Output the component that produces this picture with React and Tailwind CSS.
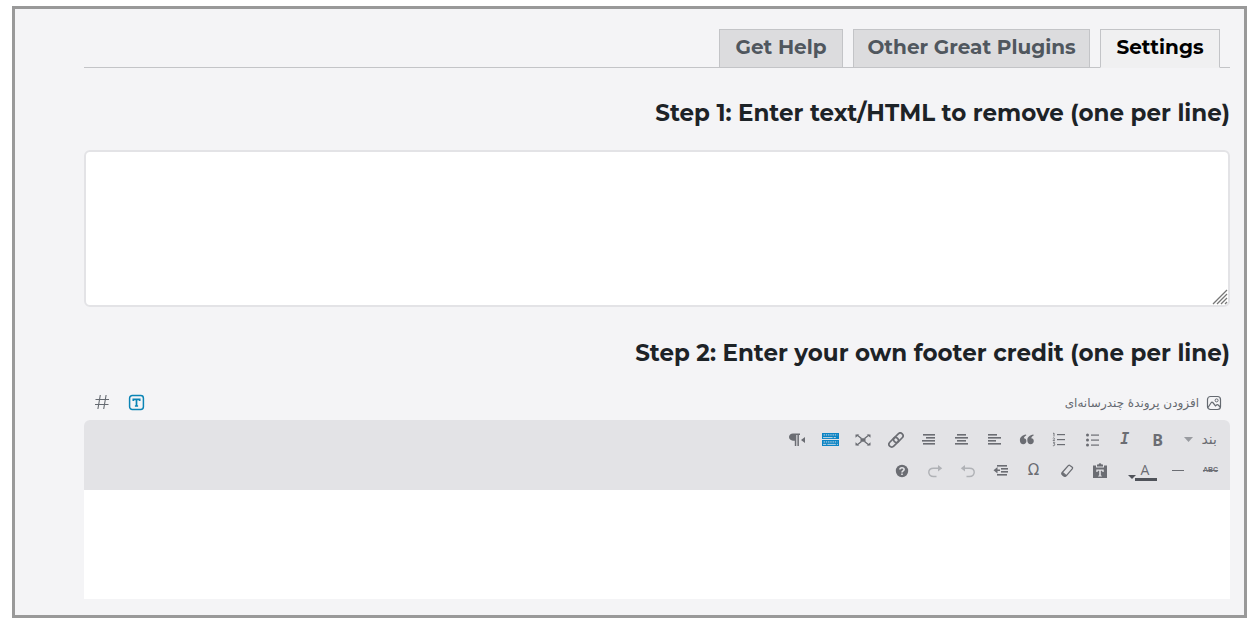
import React from "react";

const stroke = { fill: "none", stroke: "currentColor", strokeWidth: 1 };

function Icon({ children, size = 16 }) {
  return (
    <svg width={size} height={size} viewBox="0 0 16 16" className="shrink-0" aria-hidden="true">
      {children}
    </svg>
  );
}

function ToolButton({ label, className = "w-[33px] justify-center", children }) {
  return (
    <button type="button" aria-label={label} className={`flex h-[31px] items-center ${className}`}>
      {children}
    </button>
  );
}

const bars = (rows) => rows.map(([x, y, w]) => <rect key={y} x={x} y={y} width={w} height="1.6" fill="currentColor" />);

const QuoteIcon = () => (
  <Icon>
    <path
      fill="currentColor"
      d="M7.3 3.4C5.7 4 5 5 4.9 6.3c1.5.1 2.5 1.2 2.5 2.7 0 1.7-1.3 3.2-3.100 3.200-2 0-3.400-1.600-3.400-4C.9 5.300 3.300 3.200 7 2.600zM14.700 3.400c-1.600.6-2.300 1.600-2.400 2.900 1.500.1 2.500 1.200 2.500 2.700 0 1.700-1.300 3.200-3.100 3.200-2 0-3.400-1.600-3.400-4 0-2.900 2.400-5 6.100-5.600z"
    />
  </Icon>
);

const BulletIcon = () => (
  <Icon>
    {[3.5, 8.5, 13.5].map((y) => (
      <g key={y}>
        <circle cx="3.500" cy={y - 0.5} r="1.500" fill="currentColor" />
        <rect x="7" y={y - 1} width="8" height="1.200" fill="currentColor" />
      </g>
    ))}
  </Icon>
);

const NumberIcon = () => (
  <Icon>
    {[2, 7, 12].map((y) => (
      <rect key={y} x="6" y={y} width="8" height="1.2" fill="currentColor" />
    ))}
    <path {...stroke} strokeWidth=".9" d="M2 1.500l1-.5v3.500M1.800 6.300c1-.9 2.200-.1 1.500.9L2 8.700h2M2 10.700h1.800l-1 1.300c1.600.1 1.300 2-.9 1.700" />
  </Icon>
);

const LinkIcon = () => (
  <Icon>
    <g transform="rotate(-45 8 8)" fill="none" stroke="currentColor" strokeWidth="1.700">
      <rect x="-.8" y="5.200" width="11" height="5.600" rx="2.800" />
      <rect x="5.800" y="5.200" width="11" height="5.600" rx="2.800" />
    </g>
  </Icon>
);

const ExpandIcon = () => (
  <Icon>
    <path {...stroke} strokeWidth="1.300" d="M2 3l4.500 3.500M14 3L9.500 6.500M2 13l4.500-3.500M14 13L9.500 9.500" />
    <path fill="currentColor" d="M.5 2.500h3.800L.5 5.700zM15.500 2.500h-3.800l3.800 3.200zM.5 13.500h3.800L.5 10.300zM15.500 13.500h-3.800l3.800-3.200zM5.500 6.300h5v3.400h-5z" />
  </Icon>
);

const KitchenIcon = () => (
  <Icon size={17}>
    <path fill="currentColor" d="M0 1.800h16v5.800H0zM0 8.400h16v5.800H0z" />
    <path stroke="#e3e3e6" strokeWidth=".9" strokeDasharray="1.300 .8" d="M1.500 3.700h13M1.500 10.300h13" />
    <path stroke="#e3e3e6" strokeWidth=".8" d="M1 6.200h9M11 6.200h2M1 12.600h3M5 12.600h8M14 12.600h1" />
  </Icon>
);

const PilcrowIcon = () => (
  <Icon>
    <path fill="currentColor" d="M4 1.500h7V3H9.900v11H8.400V3H7.300v11H5.800V8.700H4C1.700 8.700 0 7.200 0 5.100s1.700-3.600 4-3.600zM16 5v6l-4-3z" />
  </Icon>
);

const PasteIcon = () => (
  <Icon>
    <path fill="currentColor" fillRule="evenodd" d="M1 2.500h3v2h8v-2h3V15H1zM4.300 6.500V9h1.200l.3-1.200h1.400v4.700l-1 .3v.7h3.600v-.7l-1-.3V7.800h1.400l.3 1.200h1.200V6.500z" />
    <path fill="currentColor" d="M5 1.500h1.500C6.700.7 7.200.3 8 .3s1.300.4 1.500 1.200H11v2H5z" />
  </Icon>
);

const EraserIcon = () => (
  <Icon>
    <path {...stroke} strokeWidth="1.300" strokeLinejoin="round" d="M9.500 2.400q.7-.6 1.400 0l2.400 1.800q.6.6.1 1.400l-6.200 7.200q-1 .8-2 .1l-2-1.700q-.7-.8 0-1.700zM3.300 9.200l4 3.500" />
    <path fill="currentColor" d="M2.700 9.600l4.300 3.500c-1 1-2.200.7-3 0-1.200-1-2.100-1.600-1.300-3.500z" />
  </Icon>
);

const OutdentIcon = () => (
  <Icon>
    {bars([[4, 2, 10], [8, 5, 7], [8, 8, 7], [4, 11, 10]])}
    <path fill="currentColor" d="M.5 7.300l4-3.200v2.400H7v1.600H4.500v2.400z" />
  </Icon>
);

const UndoIcon = () => (
  <Icon>
    <path {...stroke} strokeWidth="1.400" d="M3 5.200h6.500c6.300 0 6.300 8.300 0 8.300H6.500" />
    <path fill="currentColor" d="M.8 5.200L5 1.900v6.600z" />
  </Icon>
);

const RedoIcon = () => (
  <Icon>
    <path {...stroke} strokeWidth="1.400" d="M13 5.200H6.500c-6.300 0-6.300 8.300 0 8.300h3" />
    <path fill="currentColor" d="M15.200 5.200L11 1.900v6.600z" />
  </Icon>
);

const HelpIcon = () => (
  <Icon>
    <circle cx="8" cy="8" r="6.200" fill="currentColor" />
    <path fill="none" stroke="#e3e3e6" strokeWidth="1.600" d="M5.900 6.600c0-2.500 4.200-2.500 4.200-.2C10.100 7.900 8 7.700 8 9.500M8 10.500v1.600" />
  </Icon>
);

const ImageIcon = () => (
  <Icon>
    <rect x="1.500" y="1.500" width="13" height="13" rx="3" {...stroke} strokeWidth="1.200" />
    <circle cx="10.600" cy="5.400" r="1.500" {...stroke} />
    <path {...stroke} strokeWidth="1.200" d="M2 12.500l3.300-5q.7-.8 1.500 0l2.700 3.300 1.300-1q.8-.4 1.400.2l2 2" />
  </Icon>
);

const VisualIcon = () => (
  <Icon size={17}>
    <rect x="1.500" y="1.500" width="13" height="13" rx="2.500" {...stroke} strokeWidth="1.400" />
    <path {...stroke} strokeWidth="1.600" d="M5 6.600V5h6v1.600M8 5v6.300M6.500 11.300h3" />
  </Icon>
);

const CodeIcon = () => (
  <Icon>
    <path {...stroke} strokeWidth="1.100" d="M6.300 1L3.900 15M12.100 1L9.700 15M1.500 5.500h13.500M1 10.500h13.500" />
  </Icon>
);

const tab = "flex h-[39px] items-center justify-center border border-[#c3c4c7] pb-1 font-[Montserrat,Inter,sans-serif] text-[20px] font-bold";
const heading = "text-[23px] leading-8 font-bold text-[#1d2327] font-[Montserrat,Inter,sans-serif]";

export default function App() {
  return (
    <main
      dir="rtl"
      className="mt-1.5 mr-[13px] ml-3 border-[3px] border-[#999] bg-[#f4f4f6] pt-5 pr-3.5 pb-4 pl-[69px] font-['DejaVu_Sans',sans-serif]"
    >
      <nav className="flex gap-2.5 border-b border-[#c3c4c7] px-2.5">
        <a href="#settings" aria-current="page" className={`${tab} -mb-px w-[120px] border-b-[#f0f0f1] bg-[#f0f0f1] text-black`}>
          Settings
        </a>
        <a href="#plugins" className={`${tab} -mb-px w-[237px] bg-[#dcdcde] text-[#50575e]`}>
          Other Great Plugins
        </a>
        <a href="#help" className={`${tab} -mb-px w-[124px] bg-[#dcdcde] text-[#50575e]`}>
          Get Help
        </a>
      </nav>

      <h2 className={`${heading} mt-[29px]`}>
        <label htmlFor="remove" dir="ltr" className="block text-right">
          Step 1: Enter text/HTML to remove (one per line)
        </label>
      </h2>
      <div className="relative mt-[21px]">
        <textarea
          id="remove"
          className="block h-[157px] w-full resize-none rounded-md border-2 border-[#e3e3e6] bg-white p-2 outline-none"
        />
        <svg className="pointer-events-none absolute right-0.5 bottom-0.5" width="16" height="16" viewBox="0 0 16 16" aria-hidden="true">
          <path fill="none" stroke="#777" strokeWidth="1.300" d="M1 15L15 1M5 15L15 5M9 15l6-6M13 15l2-2" />
        </svg>
      </div>

      <h2 className={`${heading} mt-[30px]`}>
        <label htmlFor="credit" dir="ltr" className="block text-right">
          Step 2: Enter your own footer credit (one per line)
        </label>
      </h2>
      <div className="mt-4 flex h-[35px] items-center justify-between pr-2 pl-px text-[#646970]">
        <button type="button" className="flex items-center gap-[7px] text-[12px]">
          <ImageIcon />
          افزودن پروندهٔ چندرسانه‌ای
        </button>
        <div className="flex">
          <button type="button" aria-label="دیداری" className="flex w-[34px] justify-center text-[#0a84b5]">
            <VisualIcon />
          </button>
          <button type="button" aria-label="متن" className="flex w-[34px] justify-center">
            <CodeIcon />
          </button>
        </div>
      </div>

      <div role="toolbar" aria-label="ویرایشگر" className="rounded-t-md bg-[#e3e3e6] px-[3px] py-1 text-[#6b6d73]">
        <div className="flex">
          <div className="relative flex w-[53px] items-center">
            <select aria-label="قالب" className="w-full appearance-none bg-transparent pr-2.5 text-[14px] outline-none">
              <option>بند</option>
            </select>
            <svg className="pointer-events-none absolute left-2.5" width="9" height="5" viewBox="0 0 9 5" aria-hidden="true">
              <path fill="#999ba0" d="M0 0h9L4.500 5z" />
            </svg>
          </div>
          <div className="grid w-[393px] grid-cols-12 justify-items-center">
            <ToolButton label="درشت">
              <span className="font-['Open_Sans',sans-serif] text-[16px] font-bold">B</span>
            </ToolButton>
            <ToolButton label="کج">
              <span className="font-['DejaVu_Sans_Mono',monospace] text-[15px] font-bold italic">I</span>
            </ToolButton>
            <ToolButton label="فهرست"><BulletIcon /></ToolButton>
            <ToolButton label="فهرست شماره‌دار"><NumberIcon /></ToolButton>
            <ToolButton label="نقل قول"><QuoteIcon /></ToolButton>
            <ToolButton label="چپ‌چین"><Icon>{bars([[2, 2, 9], [2, 5, 13], [2, 8, 8], [2, 11, 13]])}</Icon></ToolButton>
            <ToolButton label="وسط‌چین"><Icon>{bars([[4, 2, 9], [2, 5, 13], [4, 8, 9], [2, 11, 13]])}</Icon></ToolButton>
            <ToolButton label="راست‌چین"><Icon>{bars([[3, 2, 12], [6, 5, 9], [2, 8, 13], [3, 11, 12]])}</Icon></ToolButton>
            <ToolButton label="پیوند"><LinkIcon /></ToolButton>
            <ToolButton label="تمام صفحه"><ExpandIcon /></ToolButton>
            <ToolButton label="نوار ابزار" className="w-[33px] justify-center text-[#0a84c5]"><KitchenIcon /></ToolButton>
            <ToolButton label="راست به چپ"><PilcrowIcon /></ToolButton>
          </div>
        </div>
        <div className="flex">
          <ToolButton label="خط‌خورده">
            <span className="font-['Liberation_Sans',sans-serif] text-[7px] font-bold line-through">ABC</span>
          </ToolButton>
          <ToolButton label="خط افقی">
            <Icon><rect x="2" y="7" width="12" height="1" fill="currentColor" /></Icon>
          </ToolButton>
          <ToolButton label="رنگ متن" className="w-[45px] justify-start">
            <svg width="34" height="20" viewBox="0 0 34 20" aria-hidden="true">
              <text x="18" y="14" textAnchor="middle" direction="ltr" fill="currentColor" className="font-['Open_Sans',sans-serif] text-[14px]">A</text>
              <path fill="#50535a" d="M8 17h22v3H8zM1 14h8l-4 4z" />
            </svg>
          </ToolButton>
          <ToolButton label="چسباندن متن"><PasteIcon /></ToolButton>
          <ToolButton label="پاک کردن قالب"><EraserIcon /></ToolButton>
          <ToolButton label="نویسه ویژه">
            <span className="font-['DejaVu_Sans',sans-serif] text-[15px]">Ω</span>
          </ToolButton>
          <ToolButton label="کاهش تورفتگی"><OutdentIcon /></ToolButton>
          <ToolButton label="واگرد" className="w-[33px] justify-center text-[#b0b2b6]"><UndoIcon /></ToolButton>
          <ToolButton label="ازنو" className="w-[33px] justify-center text-[#b0b2b6]"><RedoIcon /></ToolButton>
          <ToolButton label="راهنما"><HelpIcon /></ToolButton>
        </div>
      </div>
      <textarea id="credit" className="block h-[109px] w-full resize-none bg-white p-3 outline-none" />
    </main>
  );
}
